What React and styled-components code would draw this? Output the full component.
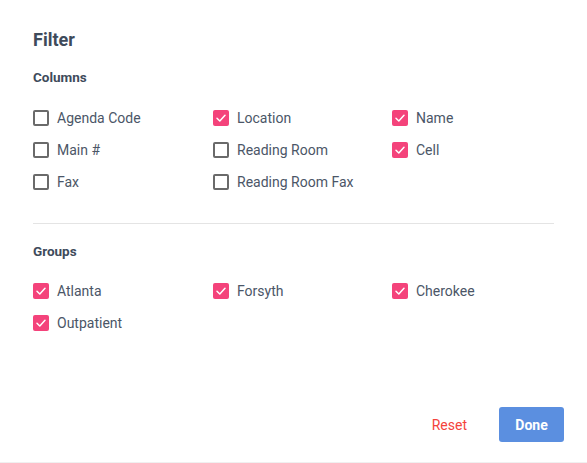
import React, { useState } from "react"
import styled, { createGlobalStyle } from "styled-components"

const GlobalStyle = createGlobalStyle`
  html, body {
    margin: 0;
    padding: 0;
    background: #fff;
  }
  body {
    font-family: Roboto, "Noto Sans", Arial, sans-serif;
    -webkit-font-smoothing: antialiased;
  }
`

const Dialog = styled.div`
  box-sizing: border-box;
  min-height: 100vh;
  display: flex;
  flex-direction: column;
  padding: 28px 33px 20px 33px;
  background: #fff;
  border-bottom: 1px solid #f0f0f0;
`

const Title = styled.h2`
  margin: 0;
  font-size: 18px;
  line-height: 24px;
  font-weight: 700;
  color: #3e4b5b;
`

const SectionTitle = styled.h3`
  margin: ${props => props.top}px 0 ${props => props.bottom}px;
  font-size: 13.5px;
  line-height: 18px;
  font-weight: 700;
  color: #3e4b5b;
`

const OptionGrid = styled.div`
  display: grid;
  grid-template-columns: 180px 179px 180px;
`

const Option = styled.label`
  display: flex;
  align-items: center;
  height: 32px;
  cursor: pointer;
  font-size: 14px;
  color: #4b5667;
  user-select: none;
`

const Box = styled.span`
  box-sizing: border-box;
  width: 16px;
  height: 16px;
  margin-right: 8px;
  border-radius: 2px;
  display: flex;
  align-items: center;
  justify-content: center;
  border: ${props => (props.checked ? "none" : "2px solid #6a6a6a")};
  background: ${props => (props.checked ? "#f4437b" : "#fff")};
`

const Divider = styled.hr`
  margin: 25px 0 0;
  border: none;
  border-top: 1px solid #e4e4e4;
`

const Footer = styled.div`
  margin-top: auto;
  margin-right: -10px;
  display: flex;
  justify-content: flex-end;
  align-items: center;
  gap: 16px;
`

const Button = styled.button`
  font-family: inherit;
  font-size: 14px;
  font-weight: ${props => (props.primary ? 700 : 400)};
  height: 35px;
  padding: 0 16px;
  min-width: ${props => (props.primary ? 65 : 0)}px;
  border: none;
  border-radius: 3px;
  cursor: pointer;
  color: ${props => (props.primary ? "#fff" : "#f4433b")};
  background: ${props => (props.primary ? "#5b8fe0" : "transparent")};
`

const Check = () => (
  <svg width="12" height="12" viewBox="0 0 12 12" fill="none">
    <path d="M2 6.3 L4.8 9 L10 3.2" stroke="#fff" strokeWidth="1.5" strokeLinecap="round" strokeLinejoin="round" />
  </svg>
)

const CheckItem = ({ label, checked, onToggle }) => (
  <Option onClick={onToggle}>
    <Box checked={checked}>{checked && <Check />}</Box>
    {label}
  </Option>
)

const initialColumns = [
  ["Agenda Code", false],
  ["Location", true],
  ["Name", true],
  ["Main #", false],
  ["Reading Room", false],
  ["Cell", true],
  ["Fax", false],
  ["Reading Room Fax", false],
]

const initialGroups = [
  ["Atlanta", true],
  ["Forsyth", true],
  ["Cherokee", true],
  ["Outpatient", true],
]

const App = () => {
  const [columns, setColumns] = useState(initialColumns)
  const [groups, setGroups] = useState(initialGroups)

  const toggle = (list, setList, i) =>
    setList(list.map((item, j) => (j === i ? [item[0], !item[1]] : item)))

  return (
    <>
      <GlobalStyle />
      <Dialog>
        <Title>Filter</Title>
        <SectionTitle top={16} bottom={16}>Columns</SectionTitle>
        <OptionGrid>
          {columns.map(([label, checked], i) => (
            <CheckItem key={label} label={label} checked={checked} onToggle={() => toggle(columns, setColumns, i)} />
          ))}
        </OptionGrid>
        <Divider />
        <SectionTitle top={18} bottom={15}>Groups</SectionTitle>
        <OptionGrid>
          {groups.map(([label, checked], i) => (
            <CheckItem key={label} label={label} checked={checked} onToggle={() => toggle(groups, setGroups, i)} />
          ))}
        </OptionGrid>
        <Footer>
          <Button>Reset</Button>
          <Button primary>Done</Button>
        </Footer>
      </Dialog>
    </>
  )
}

export default App
